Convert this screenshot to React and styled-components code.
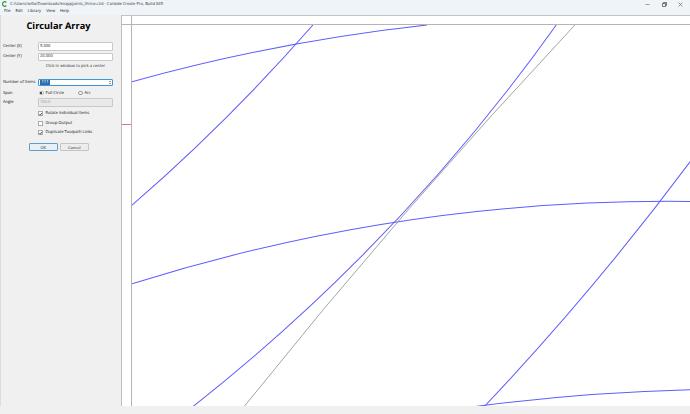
import React from 'react';
import styled, { createGlobalStyle } from 'styled-components';

const GlobalStyle = createGlobalStyle`
  html, body {
    margin: 0;
    padding: 0;
    height: 100%;
    overflow: hidden;
    background: #f0f0f0;
  }
  #root {
    height: 100%;
  }
`;

const Window = styled.div`
  width: 690px;
  height: 414px;
  display: flex;
  flex-direction: column;
  font-family: 'Open Sans', 'Noto Sans', sans-serif;
  font-size: 4.1px;
  text-rendering: geometricPrecision;
  color: #111;
  background: #f0f0f0;
  overflow: hidden;
`;

const TitleBar = styled.div`
  height: 8px;
  flex: none;
  display: flex;
  align-items: center;
  padding: 0 1px 0 2px;
  background: #eff4f9;
`;

const TitleText = styled.span`
  margin-left: 3px;
  flex: 1;
  white-space: nowrap;
  color: #333;
`;

const WinButton = styled.span`
  width: 16.5px;
  height: 8px;
  display: flex;
  align-items: center;
  justify-content: center;
`;

const MenuBar = styled.div`
  height: 7px;
  flex: none;
  display: flex;
  align-items: center;
  gap: 5px;
  padding: 0 0 1px 4px;
  box-sizing: border-box;
  background: #eff4f9;
`;

const MenuItem = styled.span`
  white-space: nowrap;
  color: #222;
`;

const Body = styled.div`
  flex: 1;
  min-height: 0;
  display: flex;
`;

const Panel = styled.div`
  width: 122px;
  flex: none;
  box-sizing: border-box;
  border-left: 1px solid #dcdcdc;
  border-right: 1px solid #bdbdbd;
  padding-right: 8px;
  display: flex;
  flex-direction: column;
`;

const Heading = styled.h1`
  margin: 4px 0 0 0;
  padding-left: 3px;
  height: 22px;
  line-height: 14px;
  font-size: 9.2px;
  font-weight: 700;
  color: #000;
  text-align: center;
  font-family: 'Open Sans', sans-serif;
`;

const Row = styled.div`
  display: flex;
  align-items: center;
  height: ${(p) => p.$height || 8.6}px;
  margin-top: ${(p) => p.$gap || 0}px;
  padding-left: ${(p) => p.$indent || 2}px;
`;

const Label = styled.span`
  width: 35px;
  flex: none;
  white-space: nowrap;
`;

const Input = styled.div`
  flex: 1;
  height: 100%;
  box-sizing: border-box;
  display: flex;
  align-items: center;
  padding-left: 1px;
  border: 1px solid ${(p) => (p.$focus ? '#3f95d6' : '#c8c8c8')};
  border-radius: 1px;
  background: ${(p) => (p.$disabled ? '#e9e9e9' : '#fff')};
  color: ${(p) => (p.$disabled ? '#999' : '#222')};
`;

const Selected = styled.span`
  background: #2c6cae;
  color: #fff;
  padding: 0 1.5px;
  line-height: 5.6px;
`;

const Spin = styled.span`
  margin-left: auto;
  width: 4px;
  display: flex;
  flex-direction: column;
  align-items: center;
  gap: 0.8px;
`;

const SpinArrow = styled.span`
  width: 0;
  height: 0;
  border-left: 1.2px solid transparent;
  border-right: 1.2px solid transparent;
  ${(p) => (p.$down ? 'border-top' : 'border-bottom')}: 1.6px solid #333;
`;

const Hint = styled.div`
  height: 6px;
  line-height: 6px;
  margin: 2.4px 0 0 37px;
  text-align: center;
  white-space: nowrap;
  color: #333;
`;

const Radio = styled.span`
  width: 4.6px;
  height: 4.6px;
  flex: none;
  box-sizing: border-box;
  margin-left: ${(p) => p.$offset || 0}px;
  border-radius: 50%;
  border: 0.5px solid ${(p) => (p.$on ? '#bbb' : '#999')};
  background: #fff;
  display: flex;
  align-items: center;
  justify-content: center;
  &::after {
    content: '';
    width: 2.2px;
    height: 2.2px;
    border-radius: 50%;
    background: ${(p) => (p.$on ? '#111' : 'transparent')};
  }
`;

const OptionText = styled.span`
  margin-left: 2px;
  white-space: nowrap;
`;

const CheckBox = styled.span`
  width: 5.4px;
  height: 5.4px;
  flex: none;
  box-sizing: border-box;
  border: 0.5px solid #aaa;
  background: #fff;
  display: flex;
  align-items: center;
  justify-content: center;
`;

const ButtonRow = styled.div`
  display: flex;
  gap: 2.5px;
  margin: 6.5px 0 0 28px;
`;

const Button = styled.button`
  width: 28.5px;
  height: 8.6px;
  padding: 0;
  font: inherit;
  color: #222;
  border-radius: 1px;
  background: ${(p) => (p.$primary ? '#e8f1f8' : '#ededed')};
  border: 1px solid ${(p) => (p.$primary ? '#5d9fc9' : '#c4c4c4')};
`;

const Canvas = styled.div`
  flex: 1;
  min-width: 0;
  display: flex;
  flex-direction: column;
  background: #fff;
`;

const TopRuler = styled.div`
  height: 9.5px;
  flex: none;
  box-sizing: border-box;
  border-top: 1px solid #c4c4c4;
  border-bottom: 1px solid #b4b4b4;
  display: flex;
`;

const RulerCorner = styled.div`
  width: 9px;
  flex: none;
  border-right: 1px solid #b4b4b4;
`;

const Stage = styled.div`
  flex: 1;
  min-height: 0;
  display: flex;
`;

const LeftRuler = styled.div`
  width: 9px;
  flex: none;
  border-right: 1px solid #b4b4b4;
  background: #fff;
  position: relative;
`;

const RedTick = styled.span`
  position: absolute;
  left: 0;
  right: 0;
  top: 99.5px;
  height: 1.4px;
  background: #e57373;
`;

const Drawing = styled.svg`
  flex: 1;
  display: block;
  min-width: 0;
  height: 100%;
`;

const StatusBar = styled.div`
  height: 8px;
  flex: none;
  background: #f0f0f0;
`;

// circular arc through three traced points
const arc = ([a, b, c]) => {
  const d = 2 * (a[0] * (b[1] - c[1]) + b[0] * (c[1] - a[1]) + c[0] * (a[1] - b[1]));
  const sq = (p) => p[0] * p[0] + p[1] * p[1];
  const cx = (sq(a) * (b[1] - c[1]) + sq(b) * (c[1] - a[1]) + sq(c) * (a[1] - b[1])) / d;
  const cy = (sq(a) * (c[0] - b[0]) + sq(b) * (a[0] - c[0]) + sq(c) * (b[0] - a[0])) / d;
  const r = Math.hypot(a[0] - cx, a[1] - cy);
  const sweep = d > 0 ? 1 : 0;
  return `M${a[0]} ${a[1]} A${r.toFixed(1)} ${r.toFixed(1)} 0 0 ${sweep} ${c[0]} ${c[1]}`;
};

const blueCurves = [
  [[132, 81.7], [296, 44], [426.7, 25]],
  [[132, 205], [210, 133.3], [312.7, 25]],
  [[132, 283.5], [393.3, 222.3], [690, 201.2]],
  [[193, 406], [393, 223], [555.7, 25]],
  [[484.3, 405.5], [610, 263], [690, 160.7]],
  [[475, 406], [560, 396.7], [690, 389.3]],
];

const grayCurve = [[244, 406], [397, 222], [574.3, 25]];

const Check = () => (
  <svg width="4" height="4" viewBox="0 0 10 10">
    <path d="M1.5 5.5 L4 8.5 L8.5 1.5" fill="none" stroke="#111" strokeWidth="2" />
  </svg>
);

export default function App() {
  return (
    <Window>
      <GlobalStyle />
      <TitleBar>
        <svg width="5" height="6" viewBox="0 0 10 12">
          <path d="M8.5 3 A4.2 4.6 0 1 0 8.5 9" fill="none" stroke="#3c9a4a" strokeWidth="2.6" />
        </svg>
        <TitleText>C:/Users/willa/Downloads/knappjoints_thrice.c2d - Carbide Create Pro, Build 845</TitleText>
        <WinButton>
          <svg width="5" height="5" viewBox="0 0 10 10">
            <path d="M1 5 H9" stroke="#666" strokeWidth="1.2" />
          </svg>
        </WinButton>
        <WinButton>
          <svg width="5" height="5" viewBox="0 0 10 10">
            <path d="M3 3 V1 H9 V7 H7 M1 3 H7 V9 H1 Z" fill="none" stroke="#444" strokeWidth="1.4" />
          </svg>
        </WinButton>
        <WinButton>
          <svg width="5" height="5" viewBox="0 0 10 10">
            <path d="M1 1 L9 9 M9 1 L1 9" stroke="#555" strokeWidth="1.2" />
          </svg>
        </WinButton>
      </TitleBar>
      <MenuBar>
        <MenuItem>File</MenuItem>
        <MenuItem>Edit</MenuItem>
        <MenuItem>Library</MenuItem>
        <MenuItem>View</MenuItem>
        <MenuItem>Help</MenuItem>
      </MenuBar>
      <Body>
        <Panel>
          <Heading>Circular Array</Heading>
          <Row $gap={1}>
            <Label>Center (X)</Label>
            <Input>5.000</Input>
          </Row>
          <Row $gap={2}>
            <Label>Center (Y)</Label>
            <Input>20.000</Input>
          </Row>
          <Hint>Click in window to pick a center</Hint>
          <Row $gap={9} $height={7.6}>
            <Label>Number of Items</Label>
            <Input $focus>
              <Selected>111</Selected>
              <Spin>
                <SpinArrow />
                <SpinArrow $down />
              </Spin>
            </Input>
          </Row>
          <Row $gap={3.5} $height={7}>
            <Label>Span</Label>
            <Radio $offset={1} $on />
            <OptionText>Full Circle</OptionText>
            <Radio $offset={14} />
            <OptionText>Arc</OptionText>
          </Row>
          <Row $gap={1} $height={9.6}>
            <Label>Angle</Label>
            <Input $disabled>180.0</Input>
          </Row>
          <Row $gap={3} $height={7} $indent={37}>
            <CheckBox><Check /></CheckBox>
            <OptionText>Rotate Individual Items</OptionText>
          </Row>
          <Row $gap={2.5} $height={7} $indent={37}>
            <CheckBox />
            <OptionText>Group Output</OptionText>
          </Row>
          <Row $gap={2.5} $height={7} $indent={37}>
            <CheckBox><Check /></CheckBox>
            <OptionText>Duplicate Toolpath Links</OptionText>
          </Row>
          <ButtonRow>
            <Button $primary>OK</Button>
            <Button>Cancel</Button>
          </ButtonRow>
        </Panel>
        <Canvas>
          <TopRuler>
            <RulerCorner />
          </TopRuler>
          <Stage>
            <LeftRuler>
              <RedTick />
            </LeftRuler>
            <Drawing viewBox="132 25 558 381" preserveAspectRatio="xMinYMin slice">
              {blueCurves.map((pts, i) => (
                <path key={i} d={arc(pts)} fill="none" stroke="#5c5cff" strokeWidth="1" />
              ))}
              <path d={arc(grayCurve)} fill="none" stroke="#8c8c8c" strokeWidth="0.8" />
            </Drawing>
          </Stage>
        </Canvas>
      </Body>
      <StatusBar />
    </Window>
  );
}
